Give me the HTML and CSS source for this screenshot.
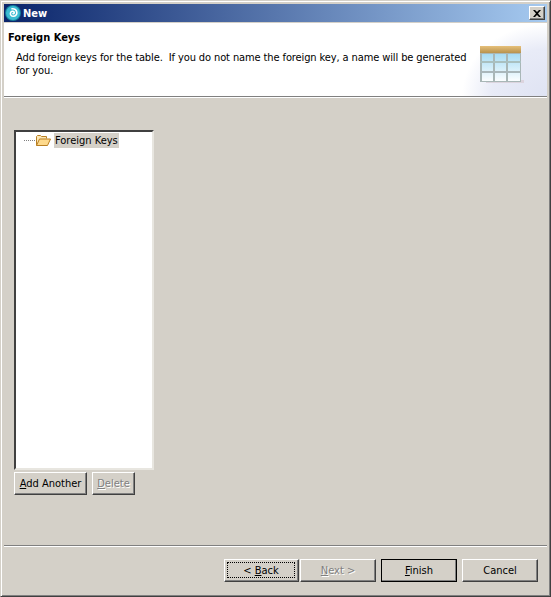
FILE: index.html
```html
<!DOCTYPE html>
<html lang="en">
<head>
    <meta charset="UTF-8">
    <title>New</title>
    <link rel="stylesheet" href="styles.css">
</head>
<body>
    <div class="window">
        <div class="titlebar">
            <svg class="app-icon" width="16" height="16" viewBox="0 0 16 16">
                <circle cx="8" cy="8" r="8" fill="#15809c"/>
                <circle cx="8" cy="8" r="7" fill="#3cbcd2"/>
                <path d="M8 8.500c.9.400 1.700-.5 1.100-1.500-.8-1.100-2.800-.9-3.500.6-.8 1.800.6 3.700 2.700 3.700 2.300 0 3.900-1.900 3.500-4.200-.4-2.200-2.500-3.700-4.800-3.300" fill="none" stroke="#fff" stroke-width="1.600" stroke-linecap="round"/>
            </svg>
            <span class="title">New</span>
            <button class="close-btn">
                <svg width="8" height="7" viewBox="0 0 8 7"><path d="M0 0h2l2 2 2-2h2L5 3.500 8 7H6L4 5 2 7H0l3-3.500z" fill="#000"/></svg>
            </button>
        </div>

        <div class="banner">
            <div class="banner-text">
                <h1>Foreign Keys</h1>
                <p>Add foreign keys for the table.  If you do not name the foreign key, a name will be generated for you.</p>
            </div>
            <svg class="banner-icon" width="44" height="38" viewBox="0 0 44 38">
                <defs>
                    <linearGradient id="cell" x1="0" y1="0" x2="0" y2="1">
                        <stop offset="0" stop-color="#a8dcf4"/>
                        <stop offset="1" stop-color="#fbfeff"/>
                    </linearGradient>
                    <linearGradient id="head" x1="0" y1="0" x2="0" y2="1">
                        <stop offset="0" stop-color="#e6c07a"/>
                        <stop offset="1" stop-color="#b8924e"/>
                    </linearGradient>
                </defs>
                <rect x="6" y="34" width="38" height="3" fill="#dcd4de"/>
                <rect x="0" y="0" width="41" height="36" fill="#a9b7b7"/>
                <rect x="0" y="0" width="41" height="7" fill="url(#head)"/>
                <rect x="2" y="8" width="11" height="27" fill="url(#cell)"/>
                <rect x="15" y="8" width="11" height="27" fill="url(#cell)"/>
                <rect x="28" y="8" width="12" height="27" fill="url(#cell)"/>
                <rect x="0" y="15" width="41" height="2" fill="#a9c0c0"/>
                <rect x="0" y="25" width="41" height="2" fill="#a9b7bb"/>
            </svg>
        </div>

        <div class="content">
            <div class="tree-panel">
                <div class="tree">
                    <div class="tree-row">
                        <span class="tree-dots"></span>
                        <svg class="folder" width="16" height="13" viewBox="0 0 16 13">
                            <path d="M1.500 11.500V2.500l1-1h3l1 1h5v2" fill="#fbe6b4" stroke="#b97f22"/>
                            <path d="M1.500 11.500l3-6.500h11l-3 6.500z" fill="#fdd98c" stroke="#b97f22"/>
                        </svg>
                        <span class="tree-label">Foreign Keys</span>
                    </div>
                </div>
                <div class="tree-buttons">
                    <button class="btn add-btn"><u>A</u>dd Another</button>
                    <button class="btn delete-btn" disabled><u>D</u>elete</button>
                </div>
            </div>
        </div>

        <div class="footer">
            <button class="btn nav-btn back-btn"><span class="focus">&lt; <u>B</u>ack</span></button>
            <button class="btn nav-btn" disabled><u>N</u>ext &gt;</button>
            <button class="btn nav-btn finish-btn"><u>F</u>inish</button>
            <button class="btn nav-btn">Cancel</button>
        </div>
    </div>
</body>
</html>
```

FILE: styles.css
```css
html, body {
    margin: 0;
    padding: 0;
}
body {
    width: 551px;
    height: 597px;
    overflow: hidden;
    font-family: "DejaVu Sans Condensed", "DejaVu Sans", sans-serif;
    font-size: 11px;
    color: #000;
}
.window {
    box-sizing: border-box;
    width: 551px;
    height: 597px;
    padding: 3px 3px 2px 3px;
    background-color: #d4d0c8;
    border-top: 1px solid #d4d0c8;
    border-left: 1px solid #d4d0c8;
    border-right: 1px solid #404040;
    border-bottom: 1px solid #404040;
    box-shadow: inset 1px 1px 0 #fff, inset -1px -1px 0 #808080;
    display: flex;
    flex-direction: column;
}
.titlebar {
    height: 18px;
    flex: none;
    display: flex;
    align-items: center;
    background: linear-gradient(to right, #0a246a, #a6caf0);
    padding: 0 2px 0 1px;
}
.app-icon {
    flex: none;
    margin-right: 2px;
}
.title {
    flex: 1;
    color: #fff;
    font-weight: bold;
    font-size: 11px;
}
.close-btn {
    width: 16px;
    height: 14px;
    padding: 0;
    display: flex;
    align-items: center;
    justify-content: center;
    background-color: #d4d0c8;
    border: 1px solid;
    border-color: #fff #404040 #404040 #fff;
    box-shadow: inset -1px -1px 0 #808080;
}
.banner {
    height: 73px;
    flex: none;
    margin-top: 1px;
    background-color: #fff;
    background-image: radial-gradient(ellipse 85px 72px at 100% 100%, #dfe3f3 0%, #e8ebf7 65%, rgba(255, 255, 255, 0) 100%);
    border-bottom: 1px solid #808080;
    box-shadow: 0 1px 0 #fff;
    display: flex;
}
.banner-text {
    width: 473px;
    flex: none;
    padding: 8px 0 0 4px;
    box-sizing: border-box;
}
.banner-text h1 {
    margin: 0;
    font-size: 11px;
    font-weight: bold;
    line-height: 13px;
}
.banner-text p {
    margin: 7px 0 0 8px;
    line-height: 13px;
    letter-spacing: -0.11px;
    white-space: pre-wrap;
}
.banner-icon {
    flex: none;
    margin: 23px 0 0 3px;
}
.content {
    flex: 1;
    padding: 33px 0 0 10px;
    border-bottom: 1px solid #808080;
    box-shadow: 0 1px 0 #fff;
}
.tree-panel {
    width: 140px;
}
.tree {
    box-sizing: border-box;
    height: 340px;
    background-color: #fff;
    border: 2px solid;
    border-color: #404040 #e8e6e0 #e8e6e0 #404040;
}
.tree-row {
    display: flex;
    align-items: center;
    height: 16px;
    padding-left: 8px;
}
.tree-dots {
    width: 11px;
    border-top: 1px dotted #808080;
}
.folder {
    margin-right: 3px;
}
.tree-label {
    background-color: #d4d0c8;
    padding: 1px 1px 1px 1px;
    line-height: 13px;
}
.tree-buttons {
    display: flex;
    gap: 5px;
    margin-top: 2px;
}
.btn {
    box-sizing: border-box;
    height: 23px;
    padding: 0;
    font-family: inherit;
    font-size: 11px;
    color: #000;
    background-color: #d4d0c8;
    border: 1px solid;
    border-color: #fff #404040 #404040 #fff;
    box-shadow: inset -1px -1px 0 #808080;
}
.btn:disabled {
    color: #808080;
    text-shadow: 1px 1px 0 #fff;
}
.add-btn {
    width: 73px;
}
.delete-btn {
    width: 43px;
}
.footer {
    height: 48px;
    flex: none;
    box-sizing: border-box;
    padding: 13px 9px 0 0;
    display: flex;
    align-items: flex-start;
    justify-content: flex-end;
}
.nav-btn {
    width: 76px;
    margin-left: 5px;
}
.back-btn {
    width: 75px;
    margin-left: 0;
    padding: 2px 3px 3px 2px;
}
.back-btn + .nav-btn {
    margin-left: 1px;
}
.focus {
    box-sizing: border-box;
    display: block;
    height: 100%;
    line-height: 15px;
    text-align: center;
    border: 1px dotted #000;
}
.finish-btn {
    outline: 1px solid #000;
    outline-offset: -1px;
}
```
